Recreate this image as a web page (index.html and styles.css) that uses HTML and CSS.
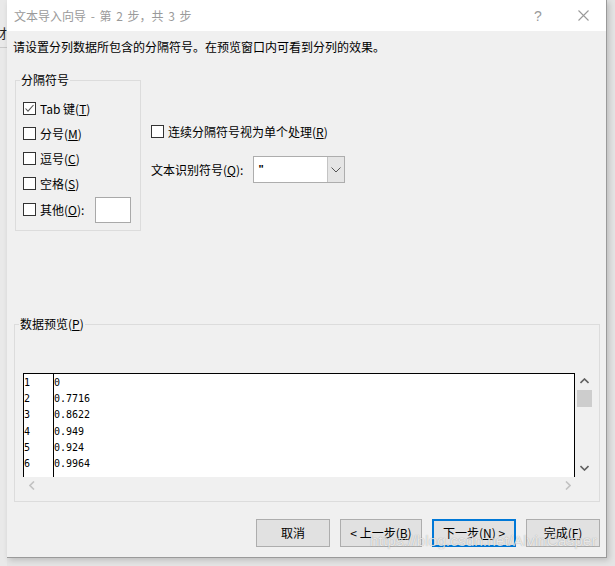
FILE: index.html
```html
<!DOCTYPE html>
<html lang="zh-CN">
<head>
<meta charset="utf-8">
<title>文本导入向导</title>
<link rel="stylesheet" href="styles.css">
</head>
<body>
<div class="desk">
  <div class="desk-left"><span class="desk-char">财</span></div>
  <div class="dialog">
    <div class="titlebar">
      <span class="title">文本导入向导 - 第 2 步，共 3 步</span>
      <span class="help">?</span>
      <svg class="close" width="11" height="11" viewBox="0 0 11 11"><path d="M0.5 0.5L10.5 10.5M10.5 0.5L0.5 10.5" stroke="#9a9a9a" stroke-width="1.1" fill="none"/></svg>
    </div>
    <div class="intro">请设置分列数据所包含的分隔符号。在预览窗口内可看到分列的效果。</div>

    <div class="top">
      <div class="group sep-group">
        <div class="group-label">分隔符号</div>
        <div class="rows">
          <div class="row"><span class="cb checked"><svg width="11" height="11" viewBox="0 0 11 11"><path d="M1.5 5.5L4 8.2L9.5 2" stroke="#555" stroke-width="1.1" fill="none"/></svg></span><span>Tab 键(<u>T</u>)</span></div>
          <div class="row"><span class="cb"></span><span>分号(<u>M</u>)</span></div>
          <div class="row"><span class="cb"></span><span>逗号(<u>C</u>)</span></div>
          <div class="row"><span class="cb"></span><span>空格(<u>S</u>)</span></div>
          <div class="row row-other"><span class="cb"></span><span>其他(<u>O</u>):</span><span class="other-box"></span></div>
        </div>
      </div>
      <div class="options">
        <div class="row opt-row"><span class="cb"></span><span>连续分隔符号视为单个处理(<u>R</u>)</span></div>
        <div class="qual-row">
          <span>文本识别符号(<u>Q</u>):</span>
          <div class="combo">
            <span class="combo-val">"</span>
            <span class="combo-btn"><svg width="10" height="6" viewBox="0 0 10 6"><path d="M0.5 0.5L5 5L9.5 0.5" stroke="#555" stroke-width="1" fill="none"/></svg></span>
          </div>
        </div>
      </div>
    </div>

    <div class="group preview-group">
      <div class="group-label">数据预览(<u>P</u>)</div>
      <div class="preview">
        <div class="pbox">
          <div class="pcol pnum">
            <div>1</div><div>2</div><div>3</div><div>4</div><div>5</div><div>6</div>
          </div>
          <div class="pcol pval">
            <div>0</div><div>0.7716</div><div>0.8622</div><div>0.949</div><div>0.924</div><div>0.9964</div>
          </div>
        </div>
        <div class="vscroll">
          <svg class="sarrow" width="9" height="6" viewBox="0 0 9 6"><path d="M0.5 5L4.5 1L8.5 5" stroke="#606060" stroke-width="1.6" fill="none"/></svg>
          <div class="thumb"></div>
          <div class="vspace"></div>
          <svg class="sarrow" width="9" height="6" viewBox="0 0 9 6"><path d="M0.5 1L4.5 5L8.5 1" stroke="#606060" stroke-width="1.6" fill="none"/></svg>
        </div>
        <div class="hscroll">
          <svg width="6" height="9" viewBox="0 0 6 9"><path d="M5 0.5L1 4.5L5 8.5" stroke="#c2c2c2" stroke-width="1.6" fill="none"/></svg>
          <svg width="6" height="9" viewBox="0 0 6 9"><path d="M1 0.5L5 4.5L1 8.5" stroke="#c2c2c2" stroke-width="1.6" fill="none"/></svg>
        </div>
      </div>
    </div>

    <div class="buttons">
      <button class="btn w74">取消</button>
      <button class="btn w82">&lt; 上一步(<u>B</u>)</button>
      <button class="btn w84 default">下一步(<u>N</u>) &gt;</button>
      <button class="btn w74">完成(<u>F</u>)</button>
    </div>
    <div class="watermark">https://blog.csdn.net/AlvinCasper</div>
  </div>
</div>
</body>
</html>
```
FILE: styles.css
```css
* { box-sizing: border-box; }
html, body { margin: 0; padding: 0; }
body {
  width: 615px;
  height: 566px;
  overflow: hidden;
  background: #dcdcdc;
  font-family: "Noto Sans CJK SC", "Noto Sans", sans-serif;
  font-size: 12px;
  color: #000;
}
.desk {
  display: flex;
  height: 566px;
  background: #e4e4e4;
}
.desk-left {
  width: 7px;
  overflow: hidden;
  padding-top: 25px;
  position: relative;
  background: #e9e9e9;
}
.desk-left::after {
  content: "";
  position: absolute;
  left: 0; right: 0; top: 47px;
  border-top: 1px solid #c9c9c9;
}
.desk-char {
  display: block;
  margin-left: -6px;
  font-size: 13px;
  line-height: 16px;
  color: #222;
}
.dialog {
  position: relative;
  width: 600px;
  height: 558px;
  background: #f0f0f0;
  border-right: 1px solid #9a9a9a;
  border-bottom: 1px solid #9a9a9a;
  box-shadow: 2px 2px 6px rgba(0,0,0,0.18);
  display: flex;
  flex-direction: column;
}
.titlebar {
  height: 31px;
  background: #fff;
  display: flex;
  align-items: center;
  padding-left: 7px;
  color: #9a9a9a;
}
.title { flex: 1; line-height: 16px; word-spacing: 2px; }
.help { width: 12px; margin-right: 32px; font-family: "Liberation Sans", sans-serif; font-size: 14px; color: #9a9a9a; }
.close { margin-right: 17px; }
.intro {
  margin-top: 8px;
  padding-left: 6px;
  line-height: 16px;
}
.top {
  display: flex;
  align-items: flex-start;
  margin-top: 25px;
  padding-left: 8px;
}
.group {
  border: 1px solid #dcdcdc;
}
.group-label {
  display: block;
  width: max-content;
  margin: -9px 0 0 4px;
  padding: 0 1px;
  background: #f0f0f0;
  line-height: 16px;
  height: 16px;
}
.sep-group {
  width: 126px;
  height: 151px;
}
.rows {
  padding: 8px 0 0 7px;
}
.row {
  display: flex;
  align-items: center;
  height: 25px;
  gap: 4px;
}
.row-other { height: 27px; }
.cb {
  width: 13px;
  height: 13px;
  border: 1px solid #333;
  background: #fff;
  display: inline-flex;
  align-items: center;
  justify-content: center;
  flex: none;
}
.other-box {
  width: 36px;
  height: 26px;
  margin-left: 7px;
  background: #fff;
  border: 1px solid #a9a9a9;
}
.options {
  margin-left: 10px;
  padding-top: 39px;
}
.opt-row { height: 25px; }
.qual-row {
  display: flex;
  align-items: center;
  margin-top: 12px;
}
.combo {
  margin-left: 10px;
  width: 92px;
  height: 27px;
  border: 1px solid #adadad;
  background: #fff;
  display: flex;
}
.combo-val { flex: 1; padding-left: 4px; line-height: 24px; font-family: "Liberation Sans", sans-serif; font-weight: bold; font-size: 11px; }
.combo-btn {
  width: 17px;
  background: #e5e5e5;
  border-left: 1px solid #c4c4c4;
  display: flex;
  align-items: center;
  justify-content: center;
}
.preview-group {
  margin: 93px 0 0 7px;
  width: 586px;
  height: 178px;
}
.preview {
  display: grid;
  grid-template-columns: 552px 17px;
  grid-template-rows: 104px 17px;
  margin: 41px 0 0 8px;
}
.pbox {
  background: #fff;
  border: 1px solid #000;
  border-bottom: 0;
  display: flex;
  font-family: "DejaVu Sans Mono", "Liberation Mono", monospace;
  font-size: 10px;
  line-height: 16.2px;
}
.pcol { padding-top: 1px; }
.pnum { width: 30px; border-right: 1px solid #000; }
.vscroll {
  display: flex;
  flex-direction: column;
  align-items: center;
  padding-top: 5px;
  padding-left: 1px;
}
.thumb {
  width: 15px;
  height: 17px;
  margin-top: 6px;
  background: #cdcdcd;
}
.vspace { flex: 1; }
.sarrow { flex: none; }
.vscroll .sarrow:last-child { margin-bottom: 6px; }
.hscroll {
  display: flex;
  justify-content: space-between;
  align-items: center;
  padding: 0 4px 0 6px;
}
.buttons {
  display: flex;
  justify-content: flex-end;
  gap: 10px;
  margin-top: 17px;
  padding-right: 6px;
}
.btn {
  height: 28px;
  background: #e1e1e1;
  border: 1px solid #adadad;
  font-family: "Noto Sans CJK SC", "Noto Sans", sans-serif;
  font-size: 12px;
  color: #000;
  padding: 0;
  line-height: 16px;
}
.btn.default { border: 2px solid #0078d7; }
.w74 { width: 74px; }
.w82 { width: 82px; }
.w84 { width: 84px; }
.watermark {
  position: absolute;
  left: 363px;
  top: 532px;
  font-family: "Liberation Sans", sans-serif;
  font-size: 15.5px;
  color: rgba(255,255,255,0.75);
  text-shadow: 0 0 1px rgba(0,0,0,0.35);
  white-space: nowrap;
}
u { text-decoration-thickness: 1px; text-underline-offset: 1px; }
```
